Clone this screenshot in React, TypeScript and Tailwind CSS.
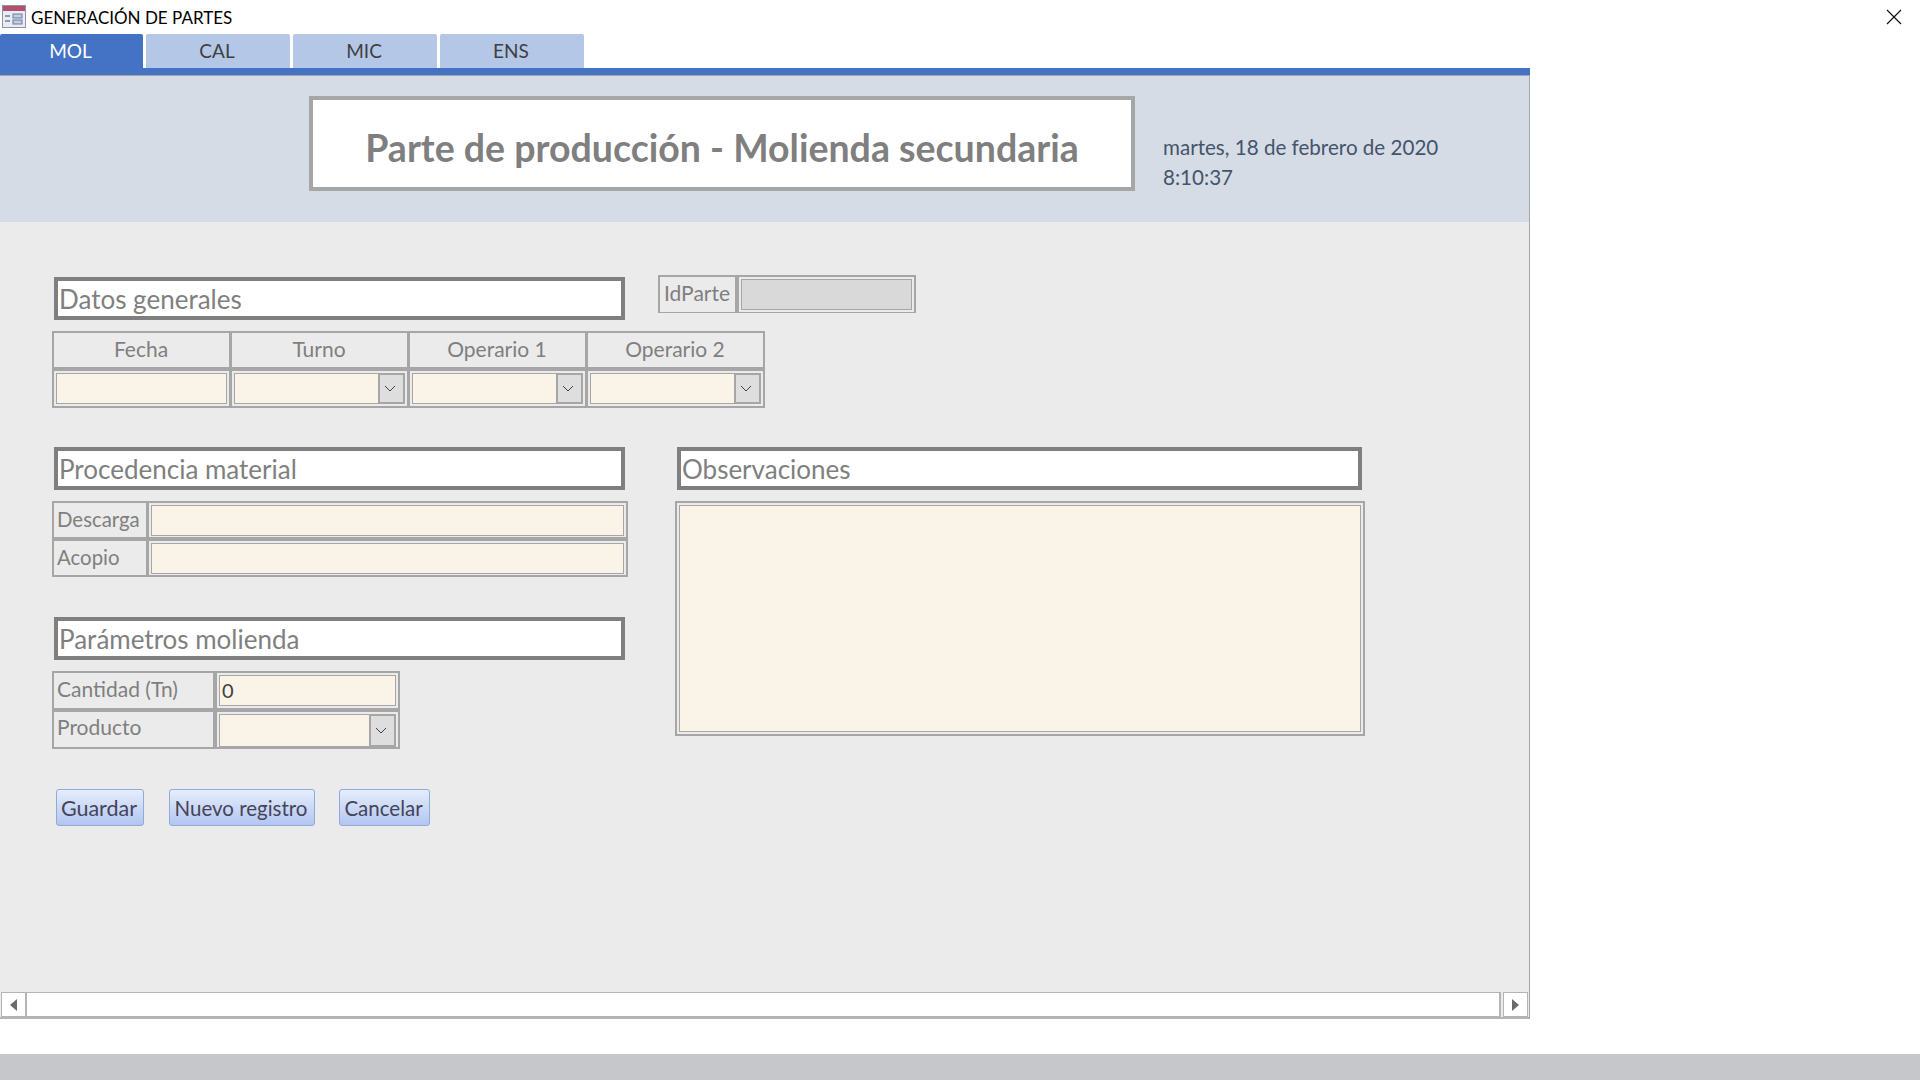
import React from 'react';

// Chevron of the combo boxes
const ComboArrow = () => (
  <svg width="12" height="7" viewBox="0 0 12 7" fill="none">
    <path d="M1 1l5 5 5-5" stroke="#404040" strokeWidth="1" />
  </svg>
);

const SectionTitle: React.FC<{ text: string; width: string }> = ({ text, width }) => (
  <div className={`${width} ml-[2px] h-[43px] shrink-0 border-4 border-[#7f7f7f] bg-white pl-[1px] text-[26px] leading-[36px] text-[#7f7f7f]`}>
    {text}
  </div>
);

const Label: React.FC<{ text: string; center?: boolean; small?: boolean; high?: boolean }> = ({ text, center, small, high }) => (
  <div className={`bg-[#ebebeb] text-[#7f7f7f] ${high ? 'leading-[29px]' : 'leading-[32px]'} ${small ? 'text-[20.4px]' : 'text-[21px]'} ${center ? 'pr-[1px] text-center' : 'pl-[3px]'}`}>
    {text}
  </div>
);

const Field: React.FC<{ value?: string; grey?: boolean }> = ({ value, grey }) => (
  <div className="h-full bg-[#ebebeb] p-[2px]">
    <div className={`h-[31px] border border-[#a6a6a6] pl-[2px] text-[20px] leading-[29px] text-[#404040] ${grey ? 'bg-[#d9d9d9]' : 'bg-[#faf3e8]'}`}>
      {value}
    </div>
  </div>
);

const Combo: React.FC<{ tall?: boolean }> = ({ tall }) => (
  <div className="h-full bg-[#ebebeb] p-[2px]">
    <div className={`flex ${tall ? 'h-[33px]' : 'h-[31px]'} border border-[#a6a6a6] bg-[#faf3e8]`}>
      <div className="flex-1" />
      <div className="-my-[1px] -mr-[1px] flex w-[27px] items-center justify-center border-2 border-[#a6a6a6] bg-[#dedede] pr-[3px]">
        <ComboArrow />
      </div>
    </div>
  </div>
);

const ActionButton: React.FC<{ text: string; width: string; wide?: boolean }> = ({ text, width, wide }) => (
  <button className={`${width} h-[37px] rounded-[3px] border border-[#8faadc] bg-gradient-to-b from-[#e6edfc] to-[#b3c6f0] pr-[2px] text-center leading-[34px] text-[#44445a] ${wide ? 'text-[21.5px]' : 'text-[20.5px]'}`}>
    {text}
  </button>
);

const Tab: React.FC<{ text: string; active?: boolean }> = ({ text, active }) => (
  <div className={`h-[34px] rounded-t-[2px] pr-[2px] text-center text-[19px] leading-[33px] ${active ? 'w-[143px] bg-[#4472c4] text-white' : 'w-[144px] bg-[#b4c7e7] text-[#404040]'}`}>
    {text}
  </div>
);

export default function App() {
  return (
    <div className="flex h-[1080px] w-[1920px] flex-col overflow-hidden bg-white font-['Lato','Liberation_Sans',sans-serif]">
      {/* Title bar */}
      <div className="flex h-[34px] shrink-0 items-center pl-[2px]">
        <svg width="24" height="23" viewBox="0 0 24 23" className="mt-[-1px]">
          <rect x="0.5" y="0.5" width="23" height="22" fill="#e8ecf4" stroke="#8d93a8" />
          <rect x="1" y="1" width="22" height="5" fill="#b4506e" />
          <path d="M3 11h5M3 16h5" stroke="#6d7d9c" strokeWidth="1.5" />
          <rect x="11" y="9" width="9" height="4" fill="#c4cde0" stroke="#6d7d9c" />
          <rect x="11" y="15" width="9" height="4" fill="#c4cde0" stroke="#6d7d9c" />
        </svg>
        <span className="ml-[5px] mt-[2px] text-[17px] text-black">GENERACIÓN DE PARTES</span>
        <svg width="16" height="16" viewBox="0 0 16 16" className="ml-auto mr-[18px]">
          <path d="M1 1l14 14M15 1L1 15" stroke="#111" strokeWidth="1.2" />
        </svg>
      </div>

      <div className="flex w-[1530px] flex-1 flex-col">
        {/* Tabs */}
        <div className="flex gap-[3px]">
          <Tab text="MOL" active />
          <Tab text="CAL" />
          <Tab text="MIC" />
          <Tab text="ENS" />
        </div>
        <div className="h-[8px] shrink-0 border-b border-[#a6a6a6] bg-[#4472c4]" />

        {/* Header */}
        <div className="flex h-[146px] shrink-0 border-r border-[#a6a6a6] bg-[#d5dce6] pl-[309px] pt-[20px]">
          <div className="h-[95px] w-[826px] border-4 border-[#a6a6a6] bg-white text-center text-[37.5px] font-bold leading-[95px] text-[#7f7f7f]">
            Parte de producción - Molienda secundaria
          </div>
          <div className="ml-[28px] mt-[36px] text-[20.6px] leading-[30px] text-[#44546a]">
            <div>martes, 18 de febrero de 2020</div>
            <div>8:10:37</div>
          </div>
        </div>

        {/* Form */}
        <div className="flex flex-1 flex-col border-r border-[#a6a6a6] bg-[#ebebeb] pl-[52px] pt-[53px]">
          <div className="flex items-start">
            <div className="mt-[2px]">
              <SectionTitle text="Datos generales" width="w-[571px]" />
            </div>
            <div className="ml-[33px] grid h-[38px] w-[258px] grid-cols-[75px_175px] gap-x-[4px] bg-[#a6a6a6] p-[2px]">
              <Label text="IdParte" center />
              <Field grey />
            </div>
          </div>

          <div className="mt-[11px] grid w-[713px] grid-cols-4 grid-rows-[34px_35px] gap-x-[3px] gap-y-[4px] bg-[#a6a6a6] p-[2px]">
            <Label text="Fecha" center />
            <Label text="Turno" center />
            <Label text="Operario 1" center />
            <Label text="Operario 2" center />
            <Field />
            <Combo />
            <Combo />
            <Combo />
          </div>

          <div className="mt-[39px] flex">
            <div className="flex w-[576px] flex-col">
              <SectionTitle text="Procedencia material" width="w-[571px]" />
              <div className="mt-[11px] grid grid-cols-[92px_1fr] grid-rows-[34px_34px] gap-x-[3px] gap-y-[4px] bg-[#a6a6a6] p-[2px]">
                <Label text="Descarga" small />
                <Field />
                <Label text="Acopio" small />
                <Field />
              </div>

              <div className="mt-[40px]">
                <SectionTitle text="Parámetros molienda" width="w-[571px]" />
              </div>
              <div className="mt-[11px] grid w-[348px] grid-cols-[159px_1fr] grid-rows-[35px_35px] gap-x-[4px] gap-y-[4px] bg-[#a6a6a6] p-[2px]">
                <Label text="Cantidad (Tn)" />
                <Field value="0" />
                <Label text="Producto" high />
                <Combo tall />
              </div>

              <div className="ml-[4px] mt-[40px] flex">
                <ActionButton text="Guardar" width="w-[88px]" wide />
                <div className="ml-[25px]">
                  <ActionButton text="Nuevo registro" width="w-[146px]" />
                </div>
                <div className="ml-[24px]">
                  <ActionButton text="Cancelar" width="w-[91px]" />
                </div>
              </div>
            </div>

            <div className="ml-[47px]">
              <SectionTitle text="Observaciones" width="w-[685px]" />
              <div className="mt-[11px] h-[235px] w-[690px] border-2 border-[#a6a6a6] p-[2px]">
                <div className="h-full border border-[#a6a6a6] bg-[#faf3e8]" />
              </div>
            </div>
          </div>

          {/* Horizontal scroll bar */}
          <div className="-ml-[52px] mt-auto flex h-[27px] shrink-0 border-b-2 border-[#b4b4b4] px-[1px]">
            <div className="flex w-[25px] items-center justify-center border border-[#b4b4b4] bg-white">
              <svg width="7" height="12" viewBox="0 0 7 12"><path d="M7 0v12L0 6z" fill="#6b6b6b" /></svg>
            </div>
            <div className="w-[1px] bg-[#b4b4b4]" />
            <div className="flex-1 border-y border-r-2 border-[#b4b4b4] bg-white" />
            <div className="w-[2px]" />
            <div className="flex w-[25px] items-center justify-center border border-[#b4b4b4] bg-white">
              <svg width="7" height="12" viewBox="0 0 7 12"><path d="M0 0v12l7-6z" fill="#6b6b6b" /></svg>
            </div>
          </div>
        </div>
      </div>

      <div className="h-[35px] shrink-0 bg-white" />
      <div className="h-[26px] shrink-0 bg-[#c6c7cb]" />
    </div>
  );
}
